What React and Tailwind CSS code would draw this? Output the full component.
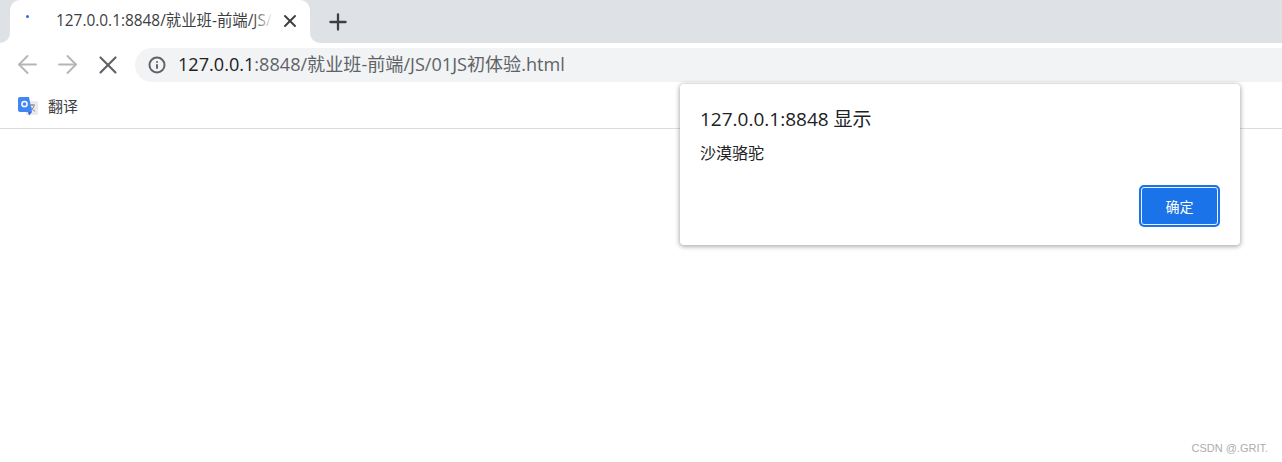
import React from "react";
import { ArrowLeft, ArrowRight, Info, Plus, X } from "lucide-react";

const uiFont = "font-['Open_Sans','Noto_Sans_CJK_SC',sans-serif]";

const TabStrip = () => (
  <div className="flex h-[43px] bg-white">
    <div className="w-[10px] bg-white">
      <div className="h-full bg-[#dee1e6] rounded-br-[10px]" />
    </div>
    <div className="w-[300px] bg-[#dee1e6]">
      <div className="flex h-full items-center rounded-t-[10px] bg-white pb-[1px]">
        <div className="ml-[16px] mb-[9px] h-[3px] w-[3px] rounded-full bg-[#1a73e8]" />
        <div className="relative ml-[27px] w-[217px] overflow-hidden whitespace-nowrap text-[15.4px] text-[#3c4043]">
          127.0.0.1:8848/就业班-前端/JS/
          <div className="absolute inset-y-0 right-0 w-[20px] bg-gradient-to-r from-white/0 to-white" />
        </div>
        <X className="ml-[7px] text-[#3c4043]" size={20} strokeWidth={2.4} />
      </div>
    </div>
    <div className="flex-1 bg-white">
      <div className="flex h-full items-center rounded-bl-[10px] bg-[#dee1e6] pl-[15px]">
        <Plus className="text-[#3c4043]" size={26} strokeWidth={2.1} />
      </div>
    </div>
  </div>
);

const Toolbar = () => (
  <div className="flex h-[43px] items-center bg-white pl-[13px]">
    <ArrowLeft className="text-[#b4b6b9]" size={29} strokeWidth={1.6} />
    <ArrowRight className="ml-[11px] text-[#b4b6b9]" size={29} strokeWidth={1.6} />
    <X className="ml-[11px] text-[#5f6368]" size={30} strokeWidth={1.7} />
    <div className="ml-[12px] mt-[1px] flex h-[34px] flex-1 items-center rounded-l-full bg-[#f1f3f4] pl-[13px]">
      <Info className="text-[#5f6368]" size={18} strokeWidth={2.6} />
      <div className="ml-[12px] whitespace-nowrap text-[18.1px] text-[#5f6368]">
        <span className="text-[#202124]">127.0.0.1</span>:8848/就业班-前端/JS/01JS初体验.html
      </div>
    </div>
  </div>
);

const TranslateIcon = () => (
  <svg width="20" height="22" viewBox="0 0 20 22">
    <rect x="8" y="5" width="12" height="14" rx="1.5" fill="#e8eaed" />
    <path d="M11 9h6M14 8v1.5M12 15c2.500-1.500 3.500-3.500 4-5.500M12.500 10.500c.8 2 2.500 3.800 4.500 4.800" stroke="#80868b" strokeWidth="1" fill="none" />
    <path d="M2 1h9l3 15H2a2 2 0 0 1-2-2V3a2 2 0 0 1 2-2z" fill="#4285f4" />
    <circle cx="6.500" cy="8" r="2.600" fill="none" stroke="#fff" strokeWidth="1.500" />
    <path d="M10 16l1 3.500 3-3.500z" fill="#3367d6" />
  </svg>
);

const BookmarkBar = () => (
  <div className="flex h-[43px] items-center border-b border-[#dadce0] bg-white pl-[18px]">
    <TranslateIcon />
    <span className="ml-[10px] mt-[-2px] text-[15px] text-[#3c4043]">翻译</span>
  </div>
);

const AlertDialog = () => (
  <div className="absolute left-[680px] top-[84px] flex h-[161px] w-[560px] flex-col rounded-[4px] bg-white pl-[20px] pr-[20px] pt-[22px] shadow-[0_1px_4px_1px_rgba(60,64,67,0.4)]">
    <div className="text-[19px] leading-[27px] text-[#202124]">127.0.0.1:8848 显示</div>
    <div className="mt-[10px] text-[16px] leading-[20px] text-[#202124]">沙漠骆驼</div>
    <div className="mt-[22px] flex justify-end">
      <button className="h-[42px] w-[81px] rounded-[5px] border-2 border-[#1a73e8] bg-[#1a73e8] text-[14px] text-white outline outline-1 -outline-offset-3 outline-[#e8f0fe]">
        确定
      </button>
    </div>
  </div>
);

const App = () => (
  <div className={`relative flex h-[462px] w-[1282px] flex-col overflow-hidden bg-white ${uiFont}`}>
    <TabStrip />
    <Toolbar />
    <BookmarkBar />
    <div className="flex flex-1 items-end justify-end pb-[6px] pr-[14px]">
      <span className="font-['Liberation_Sans',sans-serif] text-[11px] text-[#adadad]">CSDN @.GRIT.</span>
    </div>
    <AlertDialog />
  </div>
);

export default App;
